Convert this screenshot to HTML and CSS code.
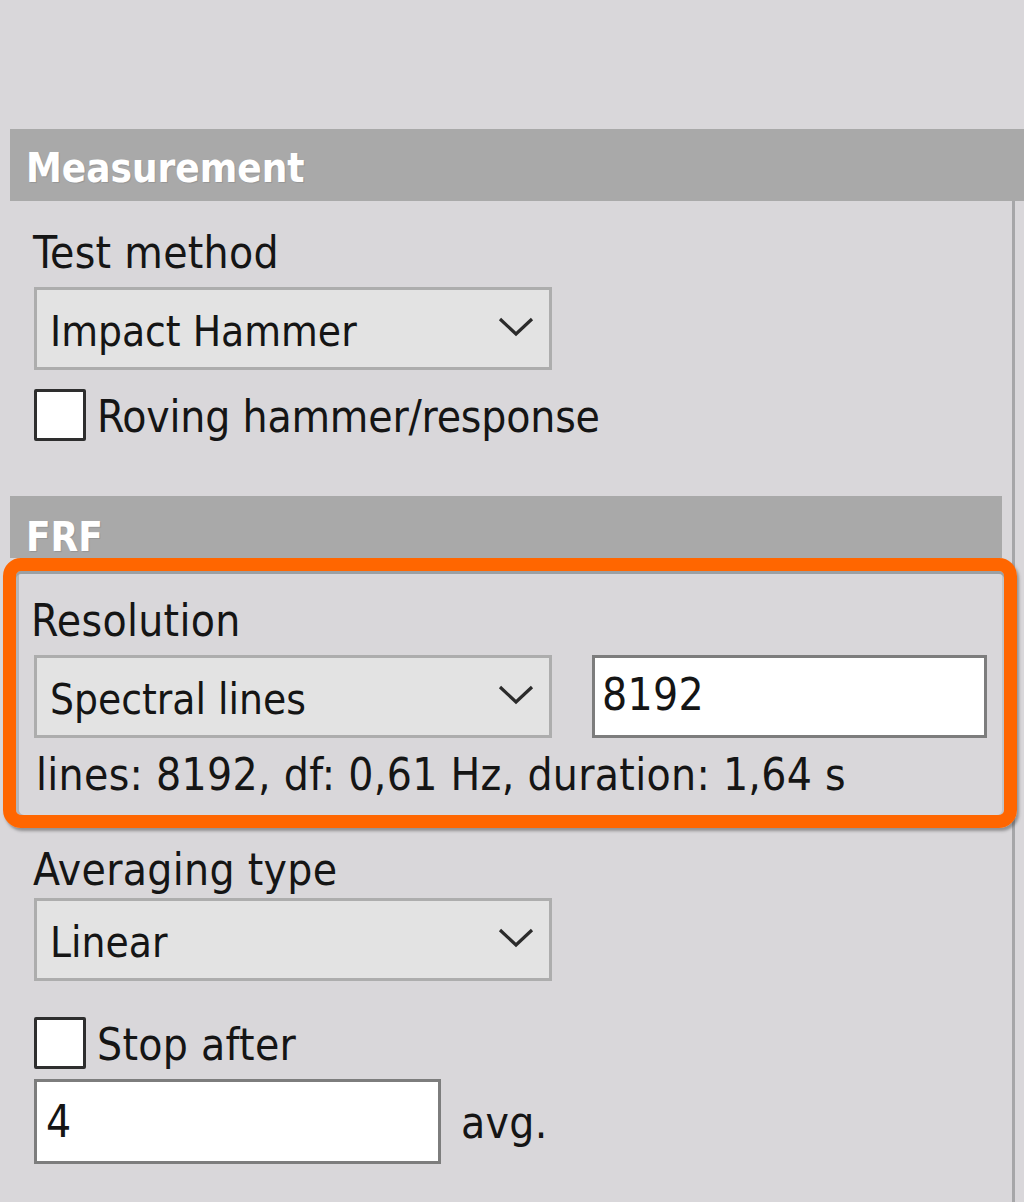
FILE: index.html
```html
<!DOCTYPE html>
<html>
<head>
<meta charset="utf-8">
<link rel="stylesheet" href="styles.css">
</head>
<body>
<div class="panel">
  <div class="section-header">Measurement</div>
  <div class="section-body">
    <div class="label label-first">Test method</div>
    <div class="combo combo-wide">
      <span class="combo-text">Impact Hammer</span>
      <svg class="chevron" width="36" height="20" viewBox="0 0 36 20"><polyline points="2,2 18,17 34,2" fill="none" stroke="#2b2b2b" stroke-width="3.2"/></svg>
    </div>
    <div class="check-row check-row-first">
      <span class="checkbox"></span>
      <span class="check-text check-text-roving">Roving hammer/response</span>
    </div>

    <div class="section-header section-header-frf">FRF</div>

    <div class="highlight">
      <div class="label label-res">Resolution</div>
      <div class="res-row">
        <div class="combo combo-wide">
          <span class="combo-text">Spectral lines</span>
          <svg class="chevron" width="36" height="20" viewBox="0 0 36 20"><polyline points="2,2 18,17 34,2" fill="none" stroke="#2b2b2b" stroke-width="3.2"/></svg>
        </div>
        <div class="textbox textbox-res"><span class="textbox-text">8192</span></div>
      </div>
      <div class="info">lines: 8192, df: 0,61 Hz, duration: 1,64 s</div>
    </div>

    <div class="label label-avg">Averaging type</div>
    <div class="combo combo-wide combo-avg">
      <span class="combo-text">Linear</span>
      <svg class="chevron" width="36" height="20" viewBox="0 0 36 20"><polyline points="2,2 18,17 34,2" fill="none" stroke="#2b2b2b" stroke-width="3.2"/></svg>
    </div>
    <div class="check-row check-row-stop">
      <span class="checkbox"></span>
      <span class="check-text">Stop after</span>
    </div>
    <div class="avg-row">
      <div class="textbox textbox-avg"><span class="textbox-text textbox-text-avg">4</span></div>
      <span class="avg-unit">avg.</span>
    </div>
  </div>
</div>
</body>
</html>
```
FILE: styles.css
```css
html, body {
  margin: 0;
  padding: 0;
  background: #d9d7da;
}
body {
  width: 1024px;
  height: 1202px;
  overflow: hidden;
  font-family: "DejaVu Sans Condensed", "DejaVu Sans", sans-serif;
  font-stretch: condensed;
  font-size: 44px;
  letter-spacing: 0.3px;
  color: #151515;
}
.panel {
  margin-top: 129px;
  margin-left: 10px;
}
.section-header {
  box-sizing: border-box;
  height: 72px;
  padding-top: 19px;
  padding-left: 16px;
  background: #a9a9a9;
  color: #ffffff;
  font-weight: bold;
  font-size: 40px;
  line-height: 40px;
  letter-spacing: 0;
  text-shadow: 1px 1px 1px rgba(0, 0, 0, 0.12);
}
.section-header-frf {
  height: 62px;
  margin-top: 55px;
  margin-left: -24px;
  margin-right: 10px;
  padding-top: 21px;
}
.section-body {
  box-sizing: border-box;
  width: 1005px;
  padding-top: 27px;
  padding-left: 24px;
  padding-bottom: 60px;
  border-right: 3px solid #a6a6a8;
}
.label {
  height: 50px;
  line-height: 50px;
  white-space: nowrap;
}
.label-first {
  margin-left: -1px;
}
.label-res {
  margin-left: -3px;
}
.label-avg {
  margin-top: 17px;
  margin-left: -1px;
}
.combo {
  box-sizing: border-box;
  height: 83px;
  background: #e3e3e3;
  border: 3px solid #adadad;
  display: flex;
  align-items: center;
  justify-content: space-between;
  padding: 6px 15px 0 13px;
  font-size: 42px;
  letter-spacing: 0;
}
.combo-wide {
  width: 518px;
  margin-top: 9px;
}
.combo-avg {
  margin-top: 3px;
}
.combo-text {
  line-height: 50px;
  white-space: nowrap;
}
.chevron {
  display: block;
  margin-top: -10px;
}
.check-row {
  display: flex;
  align-items: center;
  height: 52px;
}
.check-row-first {
  margin-top: 19px;
}
.check-row-stop {
  margin-top: 36px;
}
.checkbox {
  box-sizing: border-box;
  width: 52px;
  height: 52px;
  background: #ffffff;
  border: 3px solid #2e2e2e;
  border-radius: 2px;
  flex: none;
}
.check-text {
  margin-left: 11px;
  margin-top: 4px;
  line-height: 50px;
  white-space: nowrap;
}
.check-text-roving {
  letter-spacing: -0.2px;
}
.highlight {
  margin-left: -31px;
  margin-right: -5px;
  border: 13px solid #ff6600;
  border-radius: 18px;
  padding: 25px 0 15px 18px;
  box-shadow: 2px 3px 3px rgba(60, 60, 60, 0.45), inset 0 3px 0 #9ba0a4, inset 3px 0 0 #b4b6b9, inset -2px 0 0 #c3c4c6;
}
.res-row {
  display: flex;
  align-items: flex-start;
  gap: 40px;
}
.res-row .combo-wide {
  margin-top: 9px;
}
.textbox {
  box-sizing: border-box;
  background: #ffffff;
  border: 3px solid #7d7d7d;
  display: flex;
  align-items: center;
}
.textbox-res {
  width: 395px;
  height: 83px;
  margin-top: 9px;
  padding-left: 7px;
}
.textbox-text {
  line-height: 50px;
  margin-top: -4px;
}
.info {
  margin-top: 12px;
  margin-left: 2px;
  line-height: 50px;
  height: 50px;
  white-space: nowrap;
}
.avg-row {
  display: flex;
  align-items: center;
  margin-top: 10px;
}
.textbox-avg {
  width: 407px;
  height: 85px;
  padding-left: 9px;
}
.textbox-text-avg {
  margin-top: 0;
}
.avg-unit {
  margin-left: 20px;
  line-height: 50px;
  margin-top: 2px;
}
```
